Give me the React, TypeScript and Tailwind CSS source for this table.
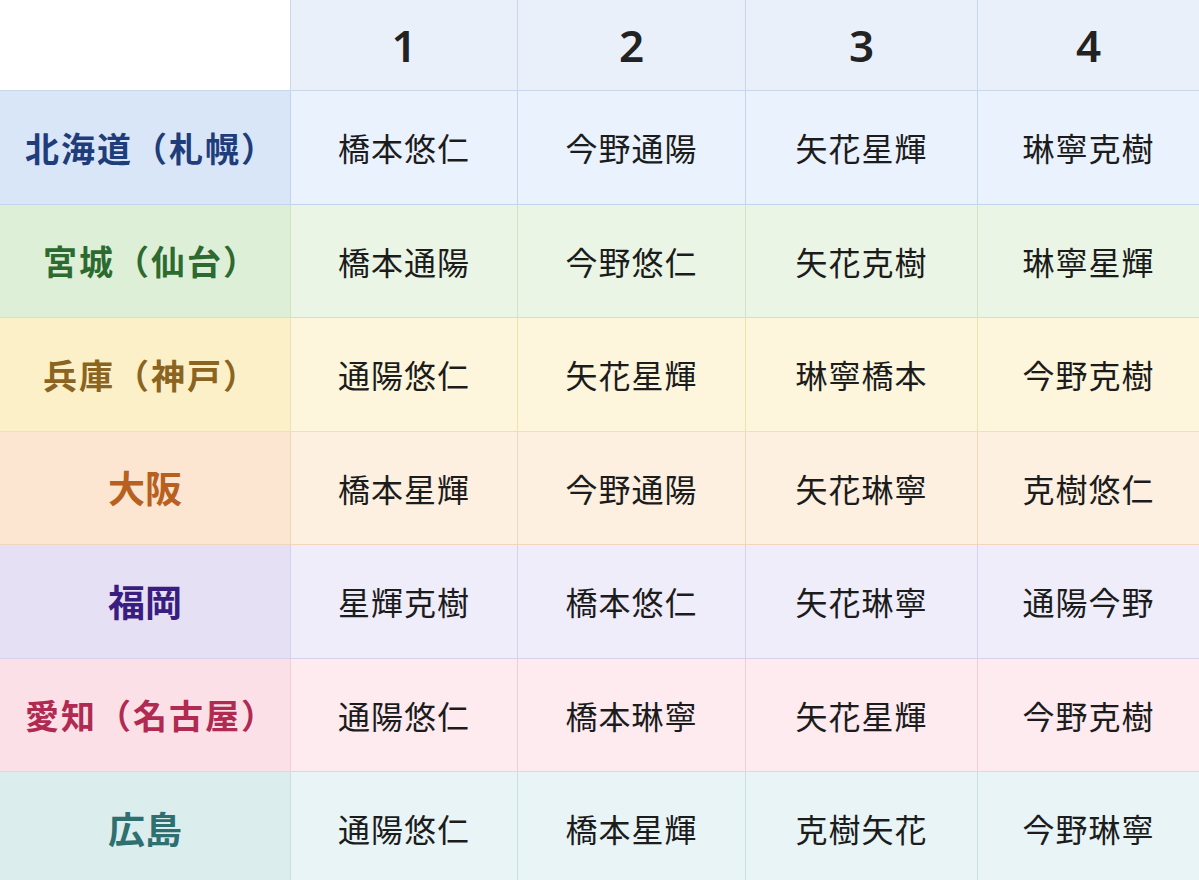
const cols = ["1", "2", "3", "4"];

type Row = {
  name: string;
  head: string;
  cell: string;
  text: string;
  line: string;
  names: string[];
};

const rows: Row[] = [
  {
    name: "北海道（札幌）",
    head: "bg-[#d9e6f7]",
    cell: "bg-[#eaf2fd]",
    text: "text-[#1f3d7a]",
    line: "border-[#c3d4ec]",
    names: ["橋本悠仁", "今野通陽", "矢花星輝", "琳寧克樹"],
  },
  {
    name: "宮城（仙台）",
    head: "bg-[#ddefd6]",
    cell: "bg-[#eaf5e5]",
    text: "text-[#2d6a2f]",
    line: "border-[#cfe3c5]",
    names: ["橋本通陽", "今野悠仁", "矢花克樹", "琳寧星輝"],
  },
  {
    name: "兵庫（神戸）",
    head: "bg-[#fcf0c9]",
    cell: "bg-[#fef6dc]",
    text: "text-[#8a6420]",
    line: "border-[#f2e1b0]",
    names: ["通陽悠仁", "矢花星輝", "琳寧橋本", "今野克樹"],
  },
  {
    name: "大阪",
    head: "bg-[#fce5d1]",
    cell: "bg-[#fdf0e1]",
    text: "text-[#b8601f]",
    line: "border-[#f1d6bd]",
    names: ["橋本星輝", "今野通陽", "矢花琳寧", "克樹悠仁"],
  },
  {
    name: "福岡",
    head: "bg-[#e6e0f5]",
    cell: "bg-[#efedfa]",
    text: "text-[#3a1d80]",
    line: "border-[#d8d0ec]",
    names: ["星輝克樹", "橋本悠仁", "矢花琳寧", "通陽今野"],
  },
  {
    name: "愛知（名古屋）",
    head: "bg-[#fbe1e7]",
    cell: "bg-[#fdebf0]",
    text: "text-[#b02a52]",
    line: "border-[#eed0d8]",
    names: ["通陽悠仁", "橋本琳寧", "矢花星輝", "今野克樹"],
  },
  {
    name: "広島",
    head: "bg-[#dcedee]",
    cell: "bg-[#e8f4f5]",
    text: "text-[#2e6f70]",
    line: "border-[#cadfe1]",
    names: ["通陽悠仁", "橋本星輝", "克樹矢花", "今野琳寧"],
  },
];

export default function App() {
  return (
    <div className="w-[1199px] h-[880px] overflow-hidden bg-white font-['Noto_Sans_CJK_JP','Noto_Sans',sans-serif]">
      <div className="grid grid-cols-[290px_227px_228px_232px_222px] grid-rows-[91px_repeat(7,113.5px)]">
        {/* header row */}
        <div className="bg-white border-b border-[#c9d7ea]" />
        {cols.map((c) => (
          <div
            key={c}
            className="flex items-center justify-center bg-[#e9f0fa] border-l border-b border-[#c9d7ea] text-[44px] font-semibold text-[#222] font-['Noto_Sans',sans-serif]"
          >
            {c}
          </div>
        ))}

        {rows.map((r) => (
          <div key={r.name} className="contents">
            <div
              className={`flex items-center justify-center border-b font-bold ${
                r.name.length > 2 ? "pl-3 text-[34px] tracking-[2px]" : "text-[37px]"
              } ${r.head} ${r.text} ${r.line}`}
            >
              {r.name}
            </div>
            {r.names.map((n, i) => (
              <div
                key={i}
                className={`flex items-center justify-center border-l border-b text-[32px] text-[#1c1c1c] tracking-[1px] ${r.cell} ${r.line}`}
              >
                {n}
              </div>
            ))}
          </div>
        ))}
      </div>
    </div>
  );
}
